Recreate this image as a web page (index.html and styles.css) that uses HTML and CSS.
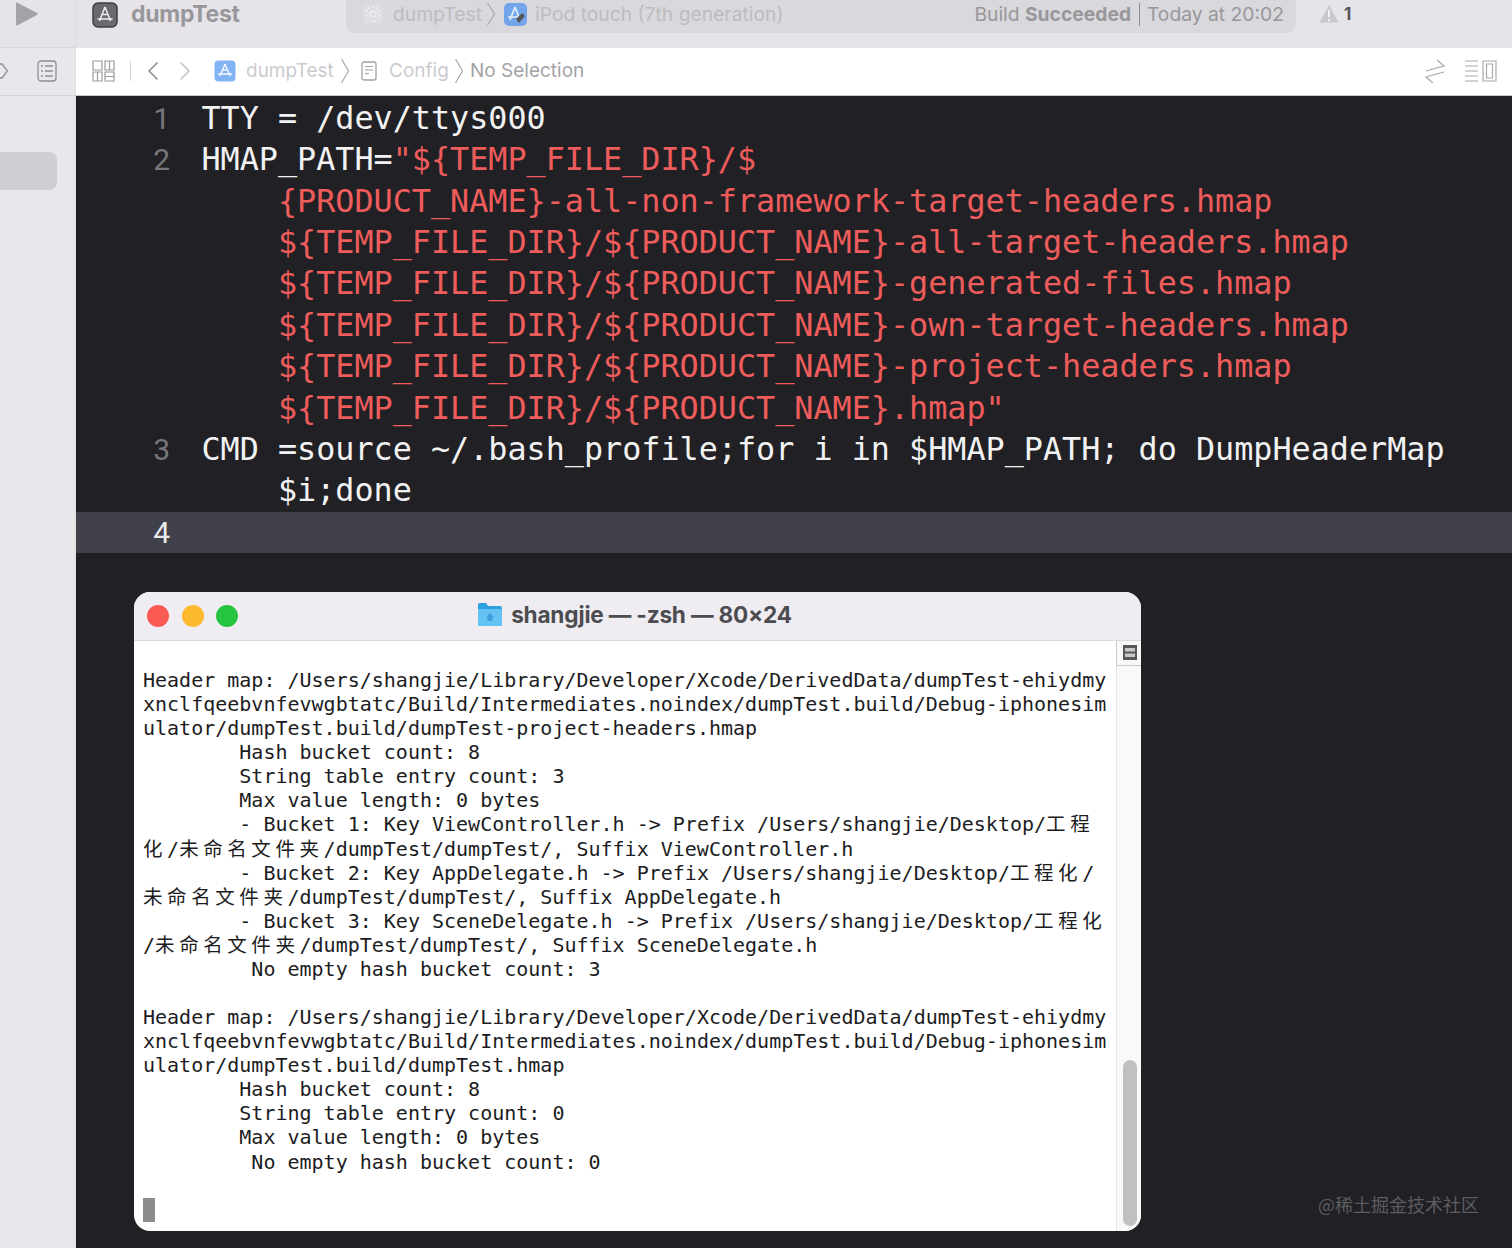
FILE: index.html
```html
<!DOCTYPE html>
<html lang="en">
<head>
<meta charset="utf-8">
<title>dumpTest</title>
<link rel="stylesheet" href="styles.css">
</head>
<body>
<div class="app">
  <header class="toolbar">
    <div class="tb-left">
      <svg class="play" width="24" height="24" viewBox="0 0 24 24"><path d="M1 1.500Q1 0 2.500.8L22 11q1.500 1 0 2L2.500 23.200Q1 24 1 22.500Z" fill="#a3a2a6"/></svg>
    </div>
    <svg class="app-icon" width="26" height="26" viewBox="0 0 26 26"><rect x="1" y="1" width="24" height="24" rx="5" fill="#6a696d" stroke="#3f3e42" stroke-width="1.500"/><path d="M13 5 7.500 19M13 5l5.500 14M5.500 17h15M10 12.500h6" stroke="#f0f0f0" stroke-width="1.500" fill="none"/></svg>
    <span class="project">dumpTest</span>
    <div class="status">
      <svg class="gear" width="24" height="24" viewBox="0 0 24 24"><rect x="2" y="2" width="20" height="20" rx="4" fill="#dddce0"/><circle cx="12" cy="12" r="7" fill="none" stroke="#eeedf0" stroke-width="2" stroke-dasharray="2 2"/><circle cx="12" cy="12" r="3" fill="none" stroke="#eeedf0" stroke-width="1.500"/></svg>
      <span class="scheme">dumpTest</span>
      <svg class="crumb" width="10" height="24" viewBox="0 0 10 24"><path d="M1.500 1 8.500 12 1.500 23" fill="none" stroke="#aaa9ad" stroke-width="1.300"/></svg>
      <svg class="ipod" width="25" height="25" viewBox="0 0 25 25"><rect x="1" y="1" width="23" height="23" rx="5" fill="#72a5ea"/><path d="M12 5 7 18M12 5l5 13M5 15h14" stroke="#e8f0fb" stroke-width="1.600" fill="none"/><path d="M13 17l6-6 3 3-6 7z" fill="#56565a"/></svg>
      <span class="device">iPod touch (7th generation)</span>
      <span class="build">Build <b>Succeeded</b> <i class="bar"></i> Today at 20:02</span>
    </div>
    <svg class="warn" width="20" height="20" viewBox="0 0 20 20"><path d="M10 1 19.500 18.500H.5Z" fill="#c9c8cc"/><path d="M10 6v7M10 15v2" stroke="#f1f0f3" stroke-width="2"/></svg>
    <span class="warn-count">1</span>
  </header>
  <div class="content">
    <aside class="sidebar">
      <div class="side-nav">
        <svg class="hex" width="9" height="18" viewBox="0 0 9 18"><path d="M0 2 H2 L7.500 9 2 16 H0" fill="none" stroke="#8f8e92" stroke-width="1.300"/></svg>
        <svg class="list" width="20" height="22" viewBox="0 0 20 22"><rect x="1" y="1" width="18" height="20" rx="3" fill="none" stroke="#8f8e92" stroke-width="1.300"/><path d="M4 6h2M8 6h8M4 11h2M8 11h8M4 16h2M8 16h8" stroke="#8f8e92" stroke-width="1.300"/></svg>
      </div>
      <div class="side-sel"></div>
    </aside>
    <main class="main">
      <nav class="jumpbar">
        <svg class="grid" width="23" height="22" viewBox="0 0 23 22"><path d="M1 1h9v9H1zM13 1h9v9h-9zM1 12h9v9H1zM13 12h9v9h-9zM5.500 12v9M17.500 1v9M13 16.500h9" fill="none" stroke="#9a9a9e" stroke-width="1.200"/></svg>
        <i class="jsep"></i>
        <svg class="back" width="12" height="20" viewBox="0 0 12 20"><path d="M10.500 1.500 2 10l8.500 8.500" fill="none" stroke="#8c8c90" stroke-width="1.500"/></svg>
        <svg class="fwd" width="12" height="20" viewBox="0 0 12 20"><path d="M1.500 1.500 10 10l-8.500 8.500" fill="none" stroke="#c4c4c8" stroke-width="1.500"/></svg>
        <svg class="j-app" width="22" height="22" viewBox="0 0 22 22"><rect x=".5" y=".5" width="21" height="21" rx="4" fill="#82b3f3"/><path d="M11 4 6 16M11 4l5 12M4 14h14M8.500 10h5" stroke="#f2f7fe" stroke-width="1.400" fill="none"/></svg>
        <span class="j-dim j-proj">dumpTest</span>
        <svg class="j-crumb" width="10" height="26" viewBox="0 0 10 26"><path d="M1.500 1 8.500 13 1.500 25" fill="none" stroke="#a8a8ac" stroke-width="1.200"/></svg>
        <svg class="j-doc" width="16" height="20" viewBox="0 0 16 20"><rect x="1" y="1" width="14" height="18" rx="2" fill="none" stroke="#a2a2a6" stroke-width="1.300"/><path d="M4 5.500h8M4 9h8M4 12.500h4" stroke="#a2a2a6" stroke-width="1.200"/></svg>
        <span class="j-dim j-conf">Config</span>
        <svg class="j-crumb2" width="10" height="26" viewBox="0 0 10 26"><path d="M1.500 1 8.500 13 1.500 25" fill="none" stroke="#a8a8ac" stroke-width="1.200"/></svg>
        <span class="j-sel">No Selection</span>
        <svg class="swap" width="22" height="24" viewBox="0 0 22 24"><path d="M2 12 20 7 13 1M20 13 2 18l7 6" fill="none" stroke="#a8a8ac" stroke-width="1.200"/></svg>
        <svg class="insp" width="33" height="22" viewBox="0 0 33 22"><path d="M1 1h13M1 6h13M1 11h13M1 16h13M1 21h13" stroke="#a8a8ac" stroke-width="1.200"/><path d="M19 1h13v20H19zM22.500 4h6v14h-6z" fill="none" stroke="#a8a8ac" stroke-width="1.200"/></svg>
      </nav>
      <section class="editor">
        <div class="code">
          <div class="row"><span class="num">1</span><div class="txt">TTY = /dev/ttys000</div></div>
          <div class="row"><span class="num">2</span><div class="txt">HMAP_PATH=<span class="str">"${TEMP_FILE_DIR}/$</span></div></div>
          <div class="row"><span class="num"></span><div class="txt wrap str">{PRODUCT_NAME}-all-non-framework-target-headers.hmap</div></div>
          <div class="row"><span class="num"></span><div class="txt wrap str">${TEMP_FILE_DIR}/${PRODUCT_NAME}-all-target-headers.hmap</div></div>
          <div class="row"><span class="num"></span><div class="txt wrap str">${TEMP_FILE_DIR}/${PRODUCT_NAME}-generated-files.hmap</div></div>
          <div class="row"><span class="num"></span><div class="txt wrap str">${TEMP_FILE_DIR}/${PRODUCT_NAME}-own-target-headers.hmap</div></div>
          <div class="row"><span class="num"></span><div class="txt wrap str">${TEMP_FILE_DIR}/${PRODUCT_NAME}-project-headers.hmap</div></div>
          <div class="row"><span class="num"></span><div class="txt wrap str">${TEMP_FILE_DIR}/${PRODUCT_NAME}.hmap"</div></div>
          <div class="row"><span class="num">3</span><div class="txt">CMD =source ~/.bash_profile;for i in $HMAP_PATH; do DumpHeaderMap</div></div>
          <div class="row"><span class="num"></span><div class="txt wrap">$i;done</div></div>
          <div class="row current"><span class="num">4</span><div class="txt"></div></div>
        </div>
        <div class="terminal">
          <div class="term-title">
            <div class="lights"><i class="light red"></i><i class="light yellow"></i><i class="light green"></i></div>
            <div class="term-name">
              <svg width="26" height="25" viewBox="0 0 26 25"><path d="M1 3q0-2 2-2h6l2 3h12q2 0 2 2v16q0 2-2 2H3q-2 0-2-2Z" fill="#2e9fe0"/><path d="M1 7h24v15q0 2-2 2H3q-2 0-2-2Z" fill="#64c3f2"/><path d="M13 11l-4 4h1.500v4h5v-4H17Z" fill="#3a9fdc"/></svg>
              <span>shangjie — -zsh — 80×24</span>
            </div>
          </div>
          <div class="term-body">
            <div class="term-text">
<div class="tl">Header map: /Users/shangjie/Library/Developer/Xcode/DerivedData/dumpTest-ehiydmy</div>
<div class="tl">xnclfqeebvnfevwgbtatc/Build/Intermediates.noindex/dumpTest.build/Debug-iphonesim</div>
<div class="tl">ulator/dumpTest.build/dumpTest-project-headers.hmap</div>
<div class="tl">        Hash bucket count: 8</div>
<div class="tl">        String table entry count: 3</div>
<div class="tl">        Max value length: 0 bytes</div>
<div class="tl">        - Bucket 1: Key ViewController.h -&gt; Prefix /Users/shangjie/Desktop/<i class="cj">工</i><i class="cj">程</i></div>
<div class="tl"><i class="cj">化</i>/<i class="cj">未</i><i class="cj">命</i><i class="cj">名</i><i class="cj">文</i><i class="cj">件</i><i class="cj">夹</i>/dumpTest/dumpTest/, Suffix ViewController.h</div>
<div class="tl">        - Bucket 2: Key AppDelegate.h -&gt; Prefix /Users/shangjie/Desktop/<i class="cj">工</i><i class="cj">程</i><i class="cj">化</i>/</div>
<div class="tl"><i class="cj">未</i><i class="cj">命</i><i class="cj">名</i><i class="cj">文</i><i class="cj">件</i><i class="cj">夹</i>/dumpTest/dumpTest/, Suffix AppDelegate.h</div>
<div class="tl">        - Bucket 3: Key SceneDelegate.h -&gt; Prefix /Users/shangjie/Desktop/<i class="cj">工</i><i class="cj">程</i><i class="cj">化</i></div>
<div class="tl">/<i class="cj">未</i><i class="cj">命</i><i class="cj">名</i><i class="cj">文</i><i class="cj">件</i><i class="cj">夹</i>/dumpTest/dumpTest/, Suffix SceneDelegate.h</div>
<div class="tl">         No empty hash bucket count: 3</div>
<div class="tl"> </div>
<div class="tl">Header map: /Users/shangjie/Library/Developer/Xcode/DerivedData/dumpTest-ehiydmy</div>
<div class="tl">xnclfqeebvnfevwgbtatc/Build/Intermediates.noindex/dumpTest.build/Debug-iphonesim</div>
<div class="tl">ulator/dumpTest.build/dumpTest.hmap</div>
<div class="tl">        Hash bucket count: 8</div>
<div class="tl">        String table entry count: 0</div>
<div class="tl">        Max value length: 0 bytes</div>
<div class="tl">         No empty hash bucket count: 0</div>
<div class="tl"> </div>
<div class="cursor"></div>
            </div>
            <div class="gutter">
              <div class="gutter-head"><svg width="14" height="15" viewBox="0 0 14 15"><rect width="14" height="15" fill="#58585a"/><rect x="2" y="3" width="10" height="3.500" fill="#c8c8c8"/><rect x="2" y="8.500" width="10" height="3.500" fill="#c8c8c8"/></svg></div>
              <div class="thumb"></div>
            </div>
          </div>
        </div>
      </section>
    </main>
  </div>
  <div class="watermark">@稀土掘金技术社区</div>
</div>
</body>
</html>
```

FILE: styles.css
```css
* { box-sizing: border-box; }
html, body { margin: 0; padding: 0; }
body { width: 1512px; height: 1248px; overflow: hidden; background: #212125; font-family: Inter, "Liberation Sans", "Noto Sans CJK SC", sans-serif; }
.app { position: relative; width: 1512px; height: 1248px; display: flex; flex-direction: column; }
svg { display: block; flex: none; }

.toolbar { height: 48px; flex: none; display: flex; align-items: flex-start; background: #e6e4e8; }
.tb-left { width: 76px; height: 48px; flex: none; padding: 2px 0 0 15px; border-right: 1px solid #dcdbdf; border-bottom: 1px solid #d8d7db; }
.app-icon { margin: 2px 0 0 16px; }
.project { margin-left: 13px; font-size: 23px; line-height: 29px; font-weight: 700; color: #98979b; width: 215px; letter-spacing: -.3px; }
.status { width: 950px; height: 33px; flex: none; display: flex; align-items: flex-start; background: #d9d8dc; border-radius: 0 0 9px 9px; padding: 2px 12px 0 15px; font-size: 19.3px; line-height: 25px; }
.scheme { margin-left: 8px; color: #bdbcc0; width: 87px; }
.crumb { margin-left: 6px; }
.ipod { margin-left: 7px; }
.device { margin-left: 7px; color: #bdbcc0; white-space: nowrap; }
.build { margin-left: auto; color: #98979b; white-space: nowrap; }
.build b { font-weight: 700; }
.bar { display: inline-block; width: 1px; height: 23px; background: #8f8e92; vertical-align: -5px; margin: 0 2px; }
.warn { margin: 4px 0 0 23px; }
.warn-count { margin: 2px 0 0 5px; font-size: 17px; line-height: 25px; font-weight: 700; color: #55555a; }

.content { flex: 1; display: flex; min-height: 0; }
.sidebar { width: 76px; flex: none; background: #e9e7eb; border-right: 1px solid #dedde1; }
.side-nav { height: 48px; display: flex; align-items: center; padding-bottom: 2px; border-bottom: 1px solid #d5d4d8; }
.list { margin-left: 28px; }
.side-sel { width: 57px; height: 38px; margin-top: 56px; background: #d0ced2; border-radius: 0 8px 8px 0; }

.main { flex: 1; min-width: 0; display: flex; flex-direction: column; }
.jumpbar { height: 48px; flex: none; display: flex; align-items: center; background: #fff; border-bottom: 1px solid #c9c9cb; padding: 0 15px 2px 16px; font-size: 19px; }
.jsep { width: 1px; height: 20px; background: #d4d4d6; margin-left: 15px; }
.back { margin-left: 16px; }
.fwd { margin-left: 20px; }
.j-app { margin-left: 23px; }
.j-dim { color: #cbcbcf; }
.j-proj { margin-left: 10px; width: 87px; }
.j-crumb { margin-left: 7px; }
.j-doc { margin-left: 11px; }
.j-conf { margin-left: 12px; width: 60px; }
.j-crumb2 { margin-left: 5px; }
.j-sel { margin-left: 6px; color: #a3a3a7; white-space: nowrap; }
.swap { margin-left: auto; }
.insp { margin-left: 18px; }

.editor { flex: 1; min-height: 0; background: #212125; }
.code { padding-top: 2px; font-family: "DejaVu Sans Mono", "Liberation Mono", monospace; font-size: 31.78px; color: #f2f2f3; }
.row { display: flex; height: 41.36px; line-height: 41.36px; white-space: pre; }
.num { width: 94px; flex: none; text-align: right; color: #77777b; font-family: Roboto, sans-serif; font-size: 30px; }
.txt { margin-left: 31.5px; }
.wrap { padding-left: 4ch; }
.str { color: #ee5c5c; }
.current { background: #3f404a; }
.current .num { color: #e8e8ea; }

.terminal { width: 1007px; height: 639px; margin: 39px 0 0 58px; background: #fff; border-radius: 16px; overflow: hidden; display: flex; flex-direction: column; }
.term-title { position: relative; height: 49px; flex: none; background: #efecf2; border-bottom: 1px solid #dad9dc; display: flex; align-items: center; justify-content: center; padding-bottom: 2px; }
.lights { position: absolute; left: 13px; top: 13px; display: flex; gap: 12.500px; }
.light { display: block; width: 22px; height: 22px; border-radius: 50%; }
.red { background: #fb5a54; }
.yellow { background: #fdb92d; }
.green { background: #27c53f; }
.term-name { display: flex; align-items: center; gap: 8px; font-size: 22.600px; font-weight: 700; color: #4c4c50; letter-spacing: -.2px; white-space: nowrap; margin-left: -6px; }
.term-body { flex: 1; min-height: 0; display: flex; }
.term-text { flex: 1; padding: 27px 0 0 9px; font-family: "DejaVu Sans Mono", "Liberation Mono", monospace; font-size: 20px; color: #1c1c1e; }
.tl { height: 24.09px; line-height: 24.09px; white-space: pre; }
.cj { display: inline-block; width: 24.08px; text-align: left; font-style: normal; font-family: "Noto Sans CJK SC", sans-serif; font-size: 19.500px; line-height: 1; }
.cursor { width: 12px; height: 24px; background: #8c8c8e; }
.gutter { width: 25px; flex: none; background: #f9f9f9; border-left: 1px solid #e6e6e6; position: relative; }
.gutter-head { height: 25px; padding: 4px 0 0 6px; border-bottom: 1px solid #c9c9c9; border-left: 1px solid #c9c9c9; margin-left: -1px; }
.thumb { position: absolute; left: 6px; top: 419px; width: 14px; height: 166px; border-radius: 7px; background: #c0c0c0; }

.watermark { position: absolute; left: 1318px; top: 1192px; font-size: 18px; line-height: 24px; color: #5c5c61; font-family: "Noto Sans CJK SC", sans-serif; white-space: nowrap; }
```
